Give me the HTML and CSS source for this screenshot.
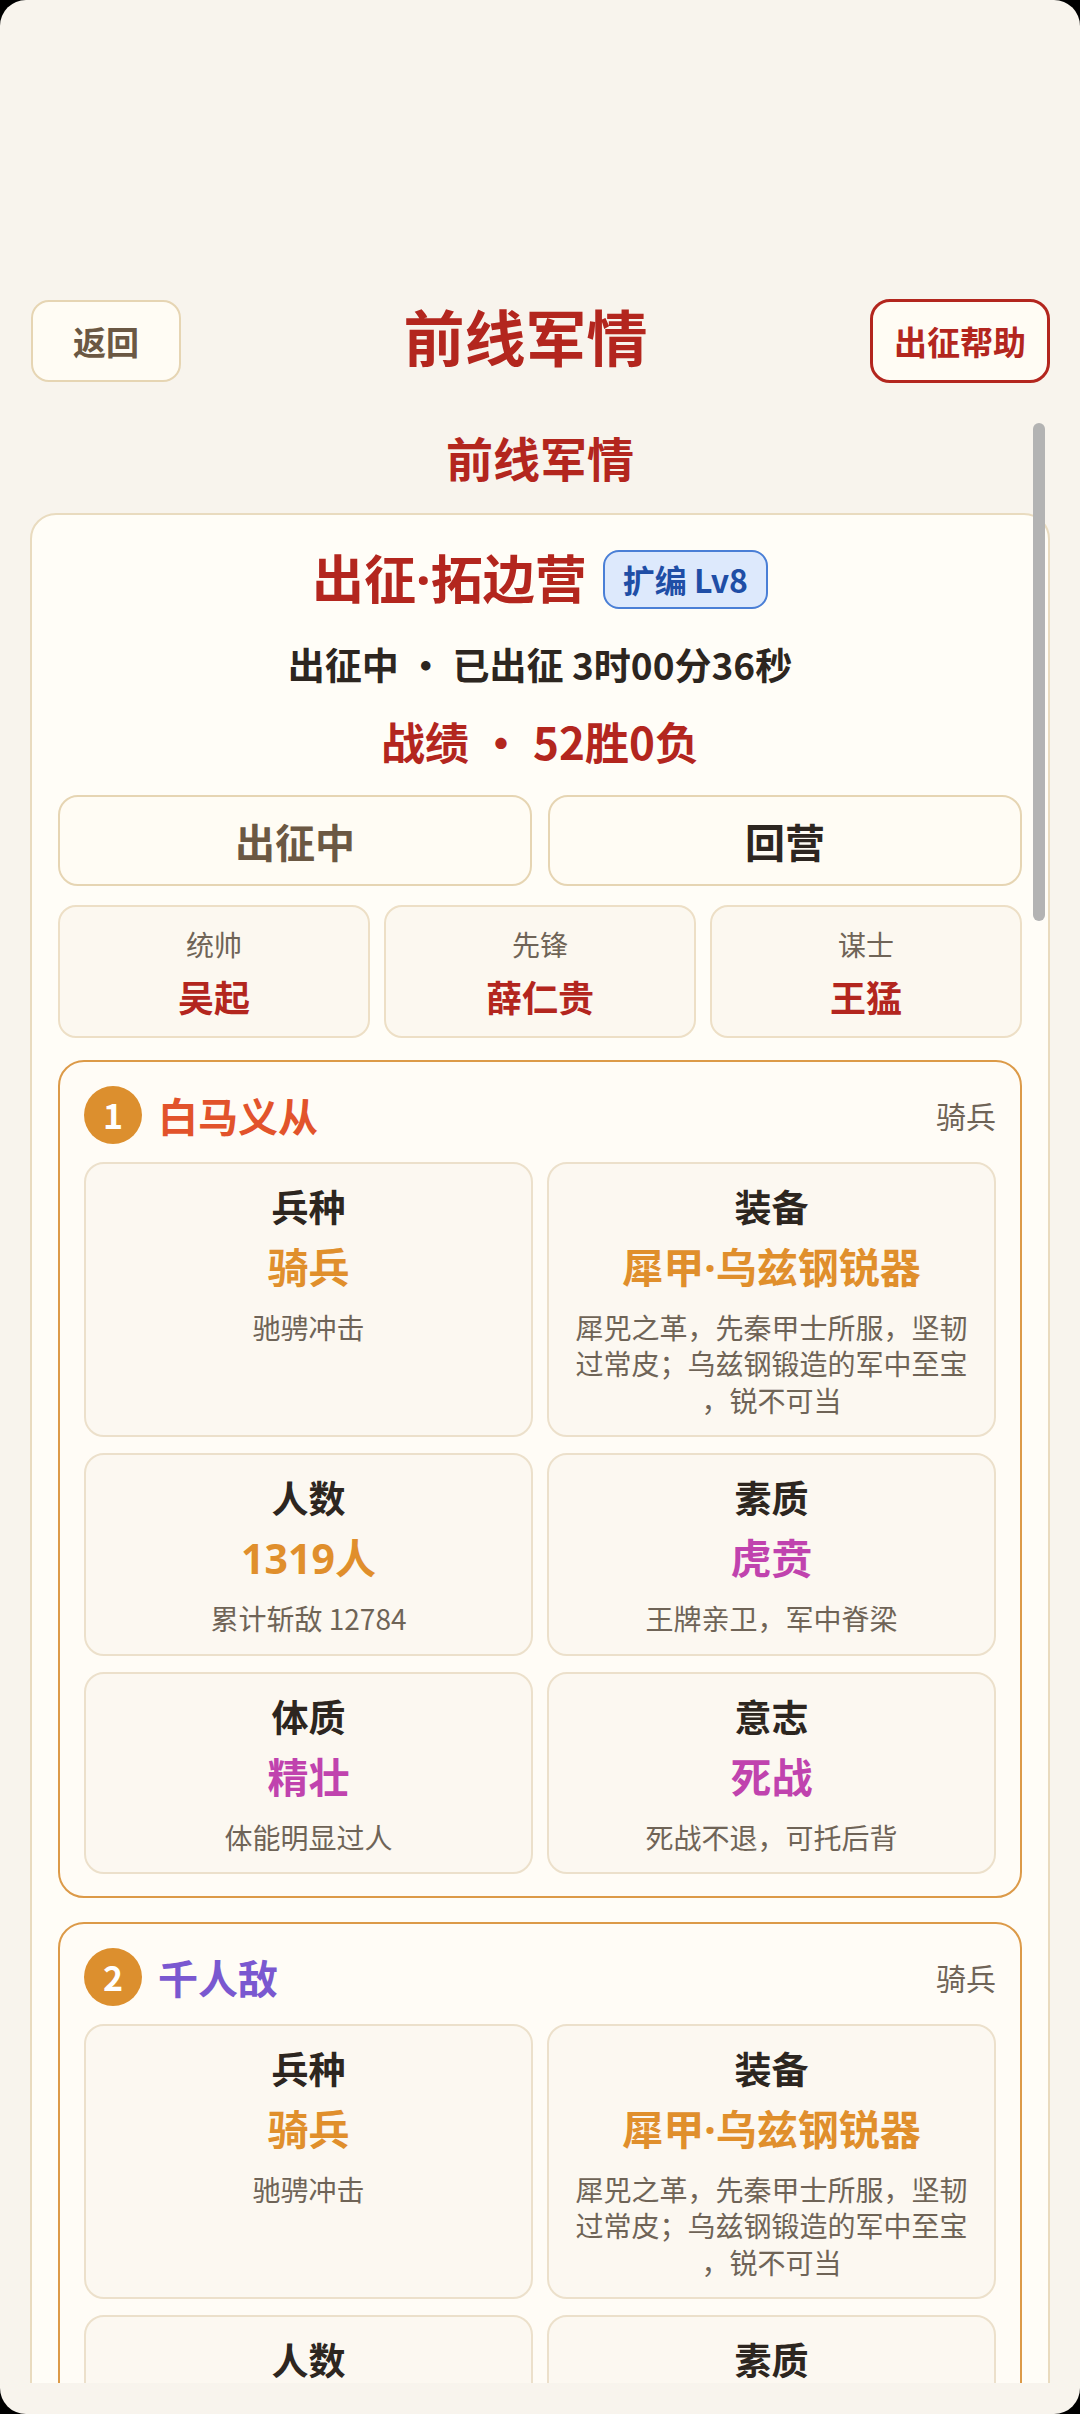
FILE: index.html
```html
<!DOCTYPE html>
<html lang="zh-CN">
<head>
    <meta charset="UTF-8">
    <title>前线军情</title>
    <link rel="stylesheet" href="styles.css">
</head>
<body>
    <div class="topbar">
        <button class="btn-back">返回</button>
        <div class="page-title">前线军情</div>
        <button class="btn-help">出征帮助</button>
    </div>

    <div class="scroll">
        <div class="scroll-content">
            <h2 class="subhead">前线军情</h2>

            <div class="camp-card">
                <div class="camp-title-row">
                    <h1 class="camp-title">出征·拓边营</h1>
                    <span class="camp-badge">扩编 Lv8</span>
                </div>
                <div class="camp-status">出征中 · 已出征 3时00分36秒</div>
                <div class="camp-record">战绩 · 52胜0负</div>

                <div class="action-row">
                    <button class="action-btn active">出征中</button>
                    <button class="action-btn">回营</button>
                </div>

                <div class="roles">
                    <div class="role">
                        <div class="role-label">统帅</div>
                        <div class="role-name">吴起</div>
                    </div>
                    <div class="role">
                        <div class="role-label">先锋</div>
                        <div class="role-name">薛仁贵</div>
                    </div>
                    <div class="role">
                        <div class="role-label">谋士</div>
                        <div class="role-name">王猛</div>
                    </div>
                </div>

                <div class="squad">
                    <div class="squad-head">
                        <span class="squad-no">1</span>
                        <span class="squad-name name-red">白马义从</span>
                        <span class="squad-type">骑兵</span>
                    </div>
                    <div class="stat-grid">
                        <div class="stat">
                            <div class="stat-label">兵种</div>
                            <div class="stat-value orange">骑兵</div>
                            <div class="stat-desc">驰骋冲击</div>
                        </div>
                        <div class="stat">
                            <div class="stat-label">装备</div>
                            <div class="stat-value orange">犀甲·乌兹钢锐器</div>
                            <div class="stat-desc">犀兕之革，先秦甲士所服，坚韧过常皮；乌兹钢锻造的军中至宝，锐不可当</div>
                        </div>
                        <div class="stat">
                            <div class="stat-label">人数</div>
                            <div class="stat-value orange">1319人</div>
                            <div class="stat-desc">累计斩敌 12784</div>
                        </div>
                        <div class="stat">
                            <div class="stat-label">素质</div>
                            <div class="stat-value purple">虎贲</div>
                            <div class="stat-desc">王牌亲卫，军中脊梁</div>
                        </div>
                        <div class="stat">
                            <div class="stat-label">体质</div>
                            <div class="stat-value purple">精壮</div>
                            <div class="stat-desc">体能明显过人</div>
                        </div>
                        <div class="stat">
                            <div class="stat-label">意志</div>
                            <div class="stat-value purple">死战</div>
                            <div class="stat-desc">死战不退，可托后背</div>
                        </div>
                    </div>
                </div>

                <div class="squad">
                    <div class="squad-head">
                        <span class="squad-no">2</span>
                        <span class="squad-name name-violet">千人敌</span>
                        <span class="squad-type">骑兵</span>
                    </div>
                    <div class="stat-grid">
                        <div class="stat">
                            <div class="stat-label">兵种</div>
                            <div class="stat-value orange">骑兵</div>
                            <div class="stat-desc">驰骋冲击</div>
                        </div>
                        <div class="stat">
                            <div class="stat-label">装备</div>
                            <div class="stat-value orange">犀甲·乌兹钢锐器</div>
                            <div class="stat-desc">犀兕之革，先秦甲士所服，坚韧过常皮；乌兹钢锻造的军中至宝，锐不可当</div>
                        </div>
                        <div class="stat">
                            <div class="stat-label">人数</div>
                            <div class="stat-value orange">1000人</div>
                            <div class="stat-desc">累计斩敌 8650</div>
                        </div>
                        <div class="stat">
                            <div class="stat-label">素质</div>
                            <div class="stat-value purple">虎贲</div>
                            <div class="stat-desc">王牌亲卫，军中脊梁</div>
                        </div>
                    </div>
                </div>
            </div>
        </div>
        <div class="scroll-thumb"></div>
    </div>
</body>
</html>
```

FILE: styles.css
```css
html {
    background: #000;
}
body {
    margin: 0;
    height: 2414px;
    overflow: hidden;
    background: #f8f4ed;
    border-radius: 26px;
    font-family: "Noto Sans CJK SC", "Noto Sans", sans-serif;
    color: #2d2620;
}
button {
    font-family: inherit;
    cursor: pointer;
}

/* header */
.topbar {
    display: flex;
    justify-content: space-between;
    align-items: center;
    margin-top: 299px;
    padding: 0 30px 0 31px;
}
.btn-back {
    width: 150px;
    height: 82px;
    background: #fffcf4;
    border: 2px solid #e6d5b3;
    border-radius: 18px;
    color: #6b5843;
    font-size: 33px;
    font-weight: 700;
}
.page-title {
    align-self: flex-start;
    margin-top: -3px;
    font-size: 61px;
    font-weight: 700;
    color: #b3261e;
    line-height: 80px;
}
.btn-help {
    width: 180px;
    height: 84px;
    background: #fffcf4;
    border: 3px solid #b3261e;
    border-radius: 20px;
    color: #b3261e;
    font-size: 33px;
    font-weight: 700;
    padding: 0;
}

/* scroll area */
.scroll {
    position: relative;
    height: 1965px;
    margin-top: 35px;
    overflow: hidden;
}
.scroll-thumb {
    position: absolute;
    top: 5px;
    right: 35px;
    width: 12px;
    height: 498px;
    border-radius: 6px;
    background: #b3b3b3;
}
.subhead {
    margin: 9px 0 26px;
    text-align: center;
    font-size: 47px;
    line-height: 60px;
    font-weight: 700;
    color: #b3261e;
}

/* camp card */
.camp-card {
    margin: 0 30px;
    padding: 34px 26px 26px;
    background: #fffdf7;
    border: 2px solid #e9dbbf;
    border-radius: 26px;
}
.camp-title-row {
    display: flex;
    justify-content: center;
    align-items: center;
    gap: 16px;
}
.camp-title {
    margin: 0;
    font-family: "Noto Sans", "Noto Sans CJK SC", sans-serif;
    font-size: 52px;
    line-height: 60px;
    font-weight: 700;
    color: #b3261e;
}
.camp-badge {
    padding: 0 18px;
    line-height: 55px;
    background: #dde9fc;
    border: 2px solid #4a7fd6;
    border-radius: 16px;
    color: #1f4ea6;
    font-size: 32px;
    font-weight: 700;
}
.camp-status {
    margin-top: 33px;
    text-align: center;
    font-size: 37px;
    line-height: 44px;
    font-weight: 700;
}
.camp-record {
    margin-top: 27px;
    text-align: center;
    font-size: 44px;
    line-height: 56px;
    font-weight: 700;
    color: #b3261e;
}

.action-row {
    display: grid;
    grid-template-columns: 1fr 1fr;
    gap: 16px;
    margin-top: 26px;
}
.action-btn {
    height: 91px;
    background: #fffcf4;
    border: 2px solid #e6d5b3;
    border-radius: 20px;
    font-size: 40px;
    font-weight: 700;
    color: #2d2620;
}
.action-btn.active {
    color: #6b5843;
}

.roles {
    display: grid;
    grid-template-columns: repeat(3, 1fr);
    gap: 14px;
    margin-top: 19px;
}
.role {
    padding: 20px 10px 17px;
    background: #fcf8f0;
    border: 2px solid #eddfc6;
    border-radius: 18px;
    text-align: center;
}
.role-label {
    font-size: 28px;
    line-height: 34px;
    color: #6f6457;
}
.role-name {
    margin-top: 12px;
    font-size: 36px;
    line-height: 46px;
    font-weight: 700;
    color: #b3261e;
}

/* squads */
.squad {
    margin-top: 22px;
    padding: 24px 24px 22px;
    background: #fffcf6;
    border: 2px solid #dc9a48;
    border-radius: 26px;
}
.squad + .squad {
    margin-top: 24px;
}
.squad-head {
    display: flex;
    align-items: center;
    gap: 16px;
    height: 58px;
}
.squad-no {
    width: 58px;
    height: 58px;
    border-radius: 50%;
    background: #dc8f2e;
    color: #fff;
    font-size: 34px;
    font-weight: 700;
    line-height: 58px;
    text-align: center;
}
.squad-name {
    font-size: 40px;
    font-weight: 700;
}
.name-red {
    color: #e2532b;
}
.name-violet {
    color: #7a58d0;
}
.squad-type {
    margin-left: auto;
    font-size: 30px;
    color: #6f6457;
}

.stat-grid {
    display: grid;
    grid-template-columns: 1fr 1fr;
    gap: 16px 14px;
    margin-top: 18px;
}
.stat {
    padding: 20px 18px 17px;
    background: #fcf8f1;
    border: 2px solid #ece0cb;
    border-radius: 20px;
    text-align: center;
}
.stat-label {
    font-size: 37px;
    line-height: 44px;
    font-weight: 700;
}
.stat-value {
    margin-top: 13px;
    font-family: "Noto Sans", "Noto Sans CJK SC", sans-serif;
    font-size: 41px;
    line-height: 52px;
    font-weight: 700;
}
.stat-value.orange {
    color: #e08f2c;
}
.stat-value.purple {
    color: #c043ae;
}
.stat-desc {
    margin-top: 16px;
    font-size: 28px;
    line-height: 36.4px;
    color: #6f6457;
    line-break: anywhere;
}
```
